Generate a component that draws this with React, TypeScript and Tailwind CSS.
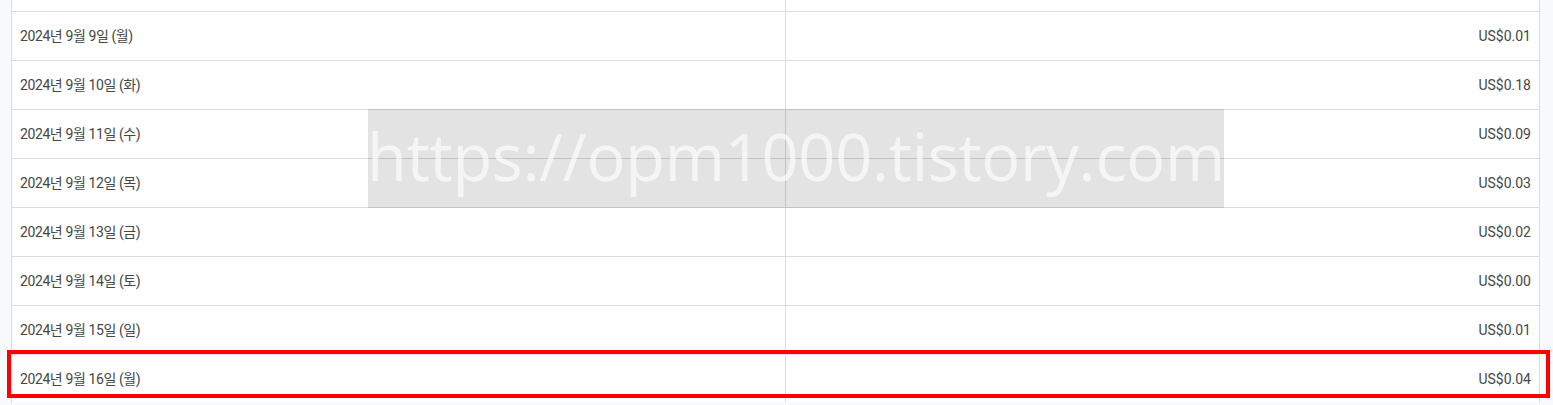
import React from "react";

const rows = [
  ["2024년 9월 9일 (월)", "US$0.01"],
  ["2024년 9월 10일 (화)", "US$0.18"],
  ["2024년 9월 11일 (수)", "US$0.09"],
  ["2024년 9월 12일 (목)", "US$0.03"],
  ["2024년 9월 13일 (금)", "US$0.02"],
  ["2024년 9월 14일 (토)", "US$0.00"],
  ["2024년 9월 15일 (일)", "US$0.01"],
  ["2024년 9월 16일 (월)", "US$0.04"],
];

export default function App() {
  return (
    <div
      className="relative h-[405px] w-[1553px] overflow-hidden bg-[#f8f9fa] pl-[11px]"
      style={{ fontFamily: "Roboto, 'Noto Sans CJK KR', sans-serif" }}
    >
      <div className="w-[1529px] border-x border-[#dadce0] bg-white">
        <div className="flex h-[11px]">
          <div className="w-[774px] border-r border-[#dadce0]" />
          <div className="flex-1" />
        </div>
        {rows.map(([d, v]) => (
          <div key={d} className="flex h-[49px] border-t border-[#dadce0] text-[14px] text-[#444746]">
            <div className="flex w-[774px] items-center border-r border-[#dadce0] pl-[8px]">
              <span className="tracking-[-0.4px]">{d}</span>
            </div>
            <div className="flex flex-1 items-center justify-end pr-[8px]">{v}</div>
          </div>
        ))}
      </div>
      <div
        className="absolute left-[368px] top-[109px] flex h-[99px] w-[856px] items-center justify-center overflow-hidden whitespace-nowrap bg-black/[0.11] pb-[4px] text-[65px] leading-none tracking-[-0.3px] text-white/65"
        style={{ fontFamily: "'Open Sans', sans-serif", fontWeight: 400 }}
      >
        https://opm1000.tistory.com
      </div>
      <div className="absolute left-[7px] top-[350px] h-[48px] w-[1543px] border-[4px] border-[#ff0000]" />
    </div>
  );
}
